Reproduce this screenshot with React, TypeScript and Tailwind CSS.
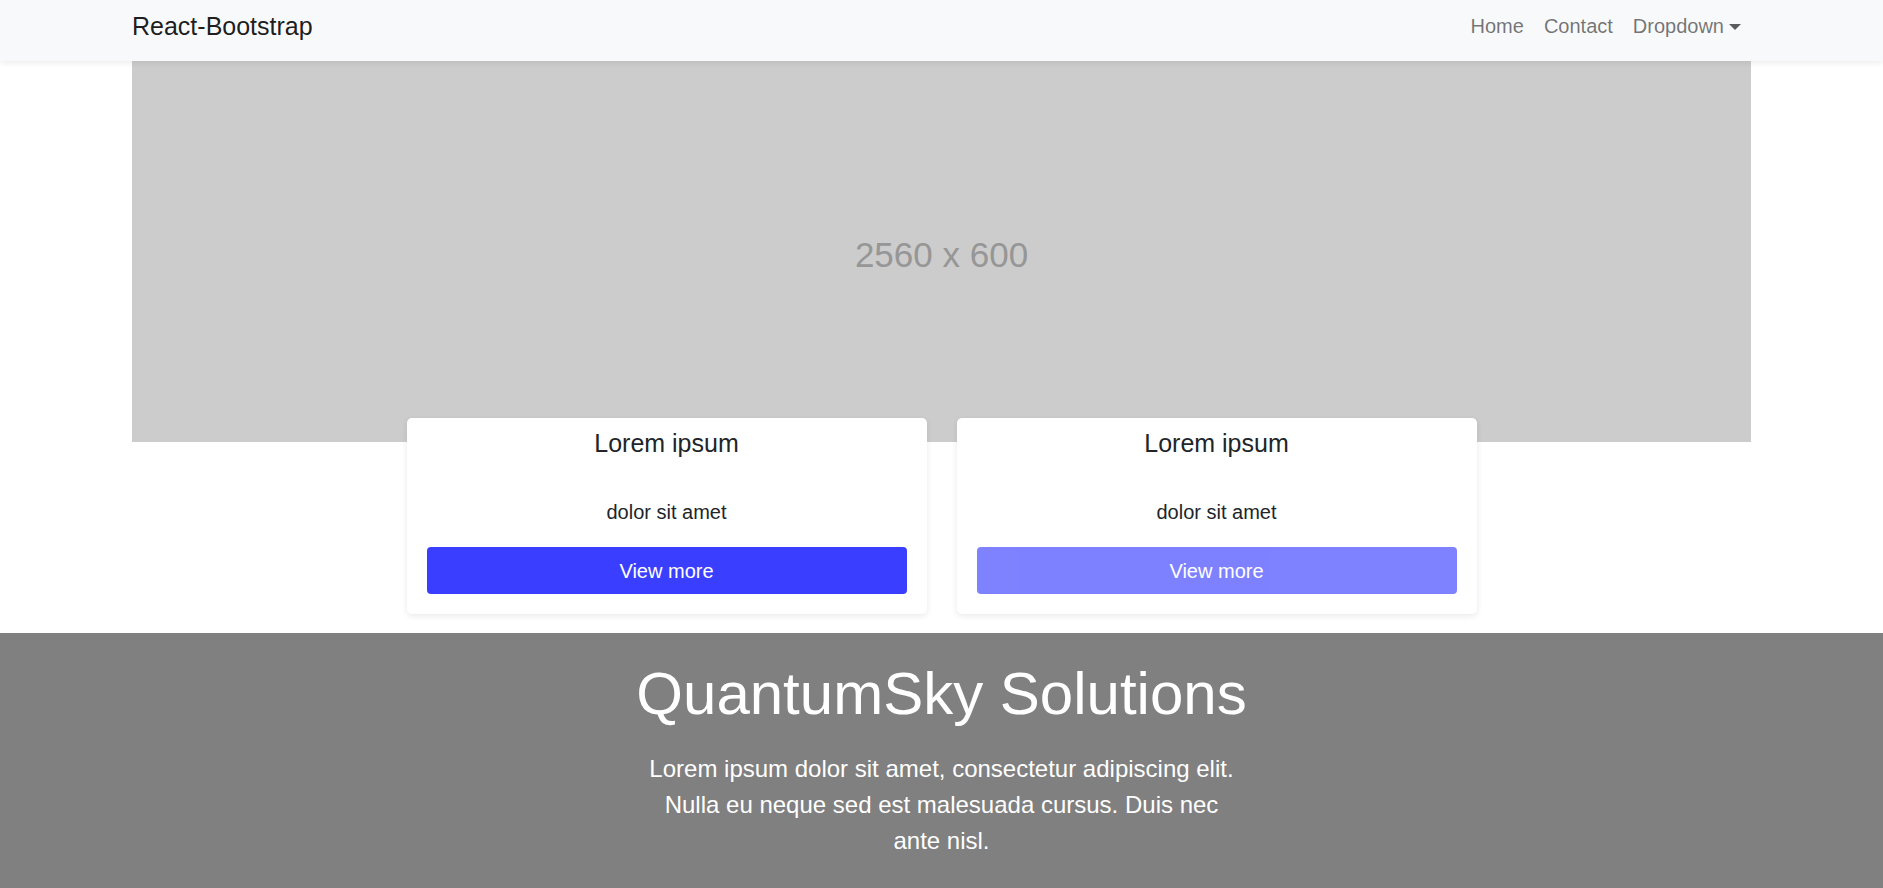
const cards = [
  { title: 'Lorem ipsum', text: 'dolor sit amet', disabled: false },
  { title: 'Lorem ipsum', text: 'dolor sit amet', disabled: true },
];

function Navbar() {
  return (
    <nav className="relative z-20 h-[61px] bg-[#f8f9fa] shadow-[0_2px_6px_rgba(0,0,0,0.08)]">
      <div className="mx-[132px] flex h-full items-center justify-between pb-[9px]">
        <a href="#" className="text-[25px] leading-[37px] text-black/90">
          React-Bootstrap
        </a>
        <ul className="flex items-center text-[20px] leading-[30px] text-black/55">
          <li>
            <a href="#" className="block px-[10px]">Home</a>
          </li>
          <li>
            <a href="#" className="block px-[10px]">Contact</a>
          </li>
          <li>
            <a href="#" className="flex items-center px-[10px]">
              Dropdown
              <span className="ml-[5px] mt-[1px] h-0 w-0 border-x-[6px] border-t-[6px] border-x-transparent border-t-[#5c5c5d]" />
            </a>
          </li>
        </ul>
      </div>
    </nav>
  );
}

function Card({ title, text, disabled }: { title: string; text: string; disabled: boolean }) {
  return (
    <div className="flex w-[520px] flex-col rounded-[5px] bg-white px-5 pt-[10px] pb-5 text-center shadow-[0_2px_6px_rgba(0,0,0,0.09)]">
      <h5 className="text-[25px] leading-[30px] text-[#212529]">{title}</h5>
      <p className="mt-[39px] text-[20px] leading-[30px] text-[#212529]">{text}</p>
      <button
        className={
          'mt-5 h-[47px] w-full rounded-[4px] bg-[#3a3fff] text-[20px] leading-[30px] text-white ' +
          (disabled ? 'opacity-65' : '')
        }
      >
        View more
      </button>
    </div>
  );
}

export default function App() {
  return (
    <div className="min-h-screen bg-white font-['Liberation_Sans',Arial,sans-serif]">
      <Navbar />

      <div className="mx-[132px] flex h-[381px] items-center justify-center bg-[#cccccc] pt-2">
        <span className="text-[35px] text-[#969696]">2560 x 600</span>
      </div>

      <div className="relative z-10 -mt-[24px] mb-[19px] flex justify-center gap-[30px]">
        {cards.map((c, i) => (
          <Card key={i} {...c} />
        ))}
      </div>

      <footer className="bg-[#808080] pt-[25px] pb-12 text-center text-white">
        <h1 className="text-[60px] leading-[72px]">QuantumSky Solutions</h1>
        <p className="mx-auto mt-[21px] w-[600px] text-[24px] leading-[36px]">
          Lorem ipsum dolor sit amet, consectetur adipiscing elit. Nulla eu neque sed est malesuada cursus. Duis nec ante nisl.
        </p>
      </footer>
    </div>
  );
}
